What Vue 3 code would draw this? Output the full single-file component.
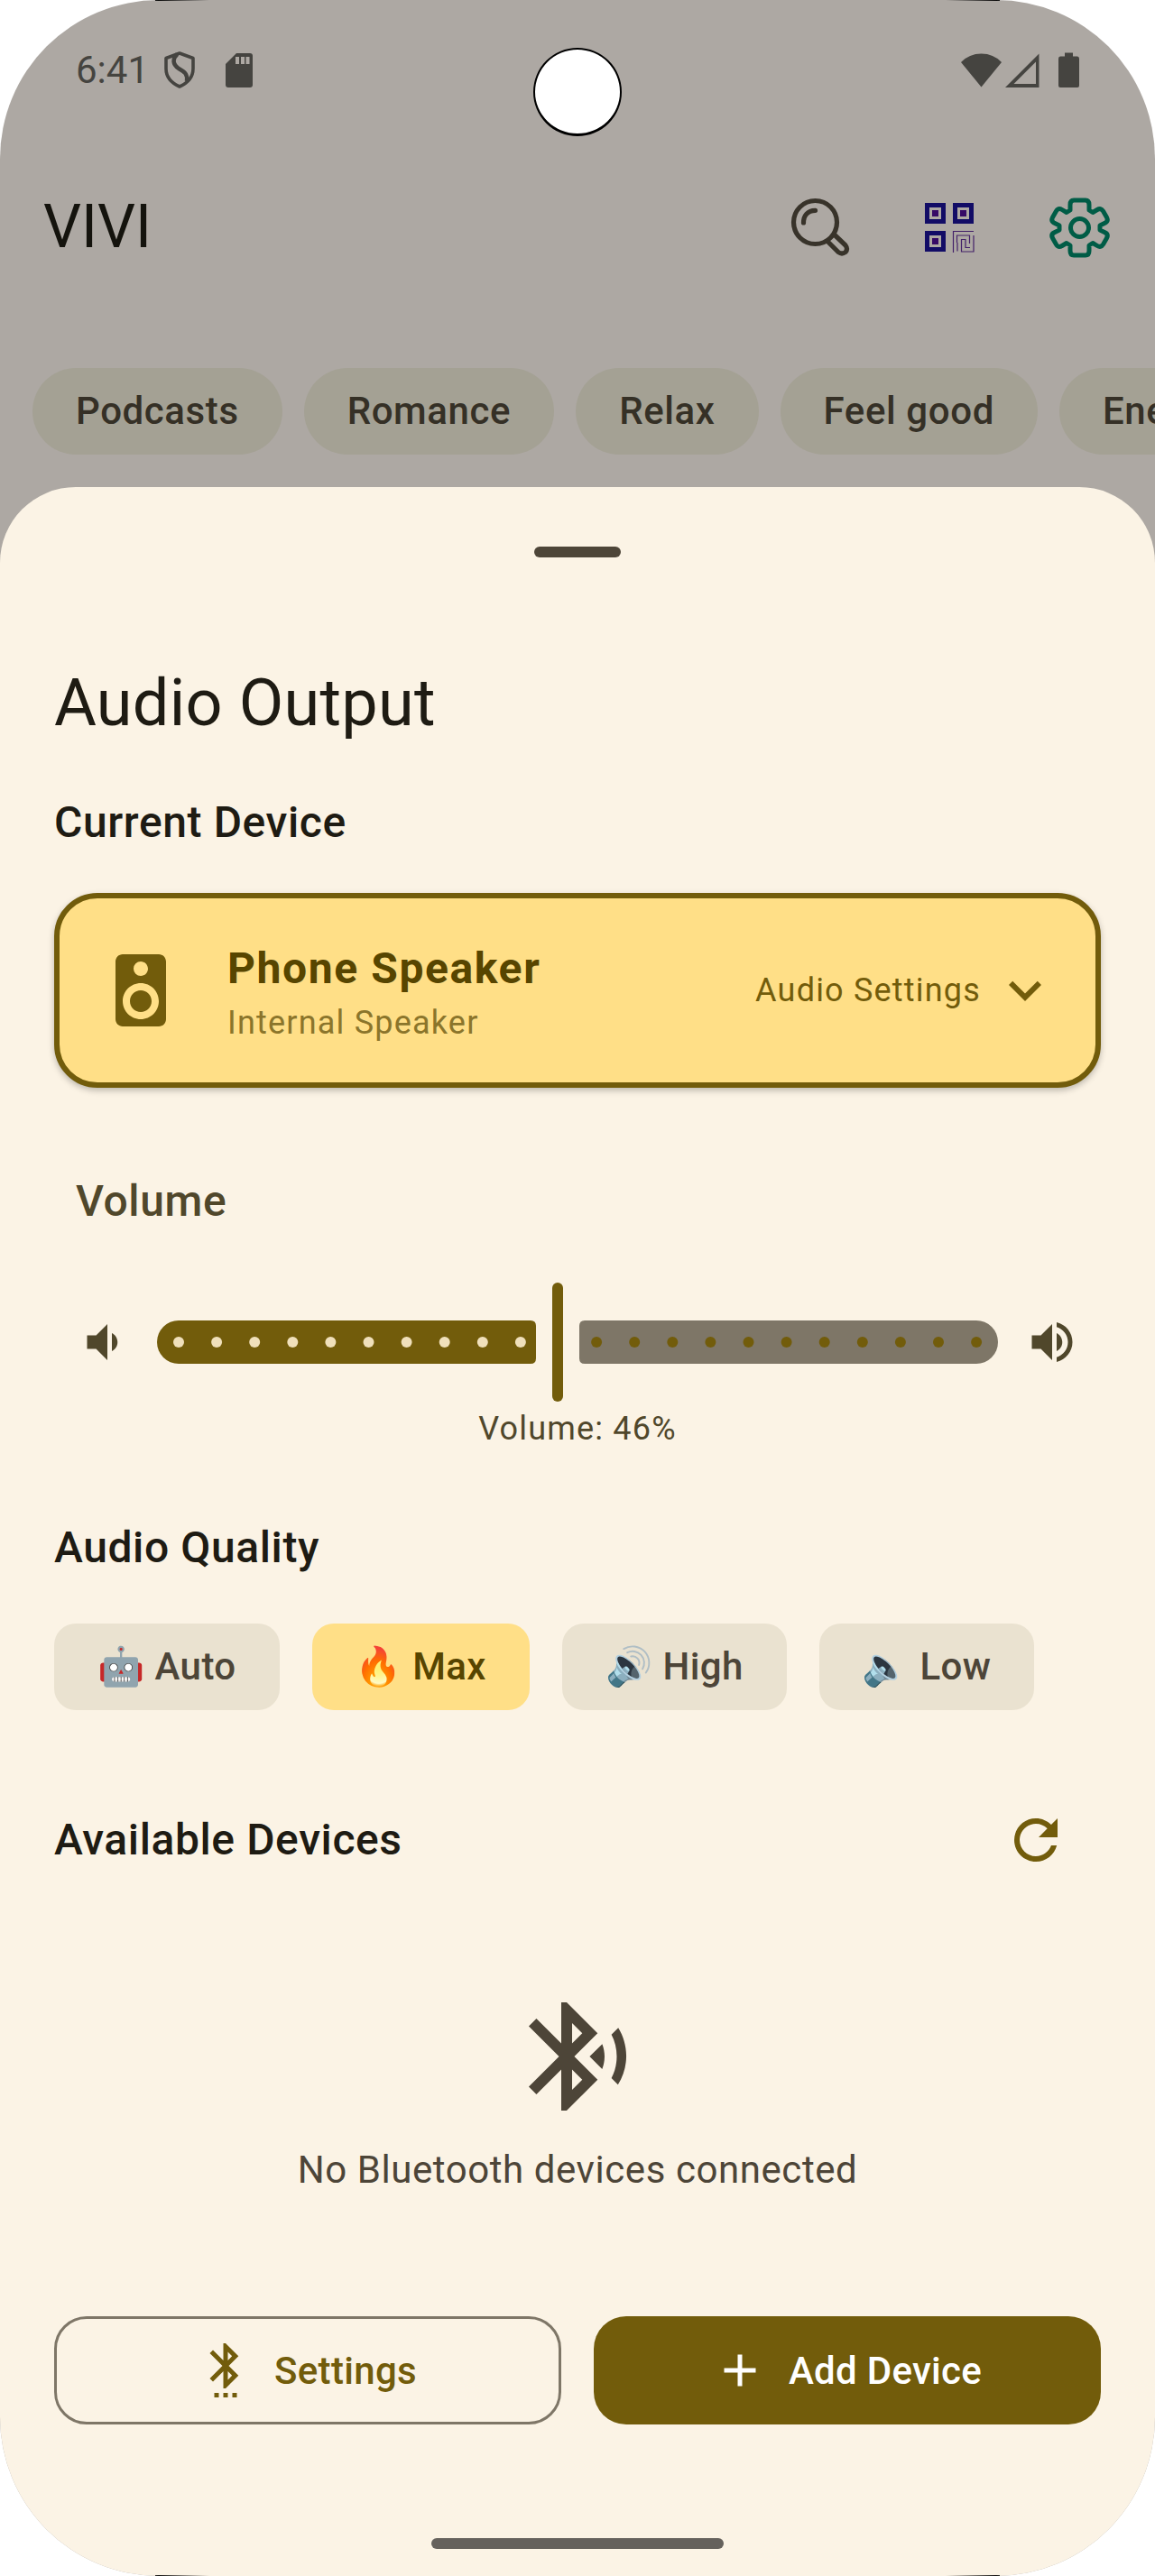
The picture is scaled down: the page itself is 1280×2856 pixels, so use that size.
<script setup>
const genres = ['Podcasts', 'Romance', 'Relax', 'Feel good', 'Energize']

const qualities = [
  { icon: '🤖', label: 'Auto' },
  { icon: '🔥', label: 'Max', active: true },
  { icon: '🔊', label: 'High' },
  { icon: '🔈', label: 'Low' },
]

// Slider ticks, in the slider's own coordinates
const tickStep = 42.1
const activeTicks = Array.from({ length: 10 }, (_, i) => 24 + i * tickStep)
const inactiveTicks = Array.from({ length: 11 }, (_, i) => 24 + (i + 11) * tickStep)
</script>

<template>
  <div class="phone">
    <div class="edge edge-top"></div>
    <div class="camera"></div>

    <header class="status">
      <div class="status-left">
        <span class="time">6:41</span>
        <svg class="shield" width="34" height="50" viewBox="0 -1 34 50" fill="none" stroke="#454440" stroke-width="3.6" stroke-linejoin="round">
          <path d="M17 5 L32 10.500 V22 C32 31 26 38 17 42 C8 38 2 31 2 22 V10.500 Z" />
          <path d="M14.500 6 C9 11 9 17 16 22 C23 26 26 28 25 36" stroke-width="4.500" />
        </svg>
        <svg class="sd" width="30" height="38" viewBox="0 0 30 38">
          <path d="M12 0 H27 Q30 0 30 3 V35 Q30 38 27 38 H3 Q0 38 0 35 V12 Z" fill="#454440" />
          <path d="M11 4h4v8h-4zM17 4h4v8h-4zM22.500 4h4v8h-4z" fill="#ada8a3" />
        </svg>
      </div>
      <div class="status-right">
        <svg width="45" height="38" viewBox="0 0 45 38"><path d="M0 10 Q9 0.500 22.500 0.500 Q36 0.500 45 10 L22.500 37.500 Z" fill="#454440" /></svg>
        <svg class="signal" width="38" height="38" viewBox="0 0 38 38"><path fill-rule="evenodd" d="M37.500 0.500 V38 H0 Z M34 9.500 V34 H9.500 Z" fill="#454440" /></svg>
        <svg class="battery" width="23" height="40" viewBox="0 0 23 40"><path d="M7 0.500 H16 V4.500 H21 Q23 4.500 23 7 V37 Q23 39 21 39 H2 Q0 39 0 37 V7 Q0 4.500 2 4.500 H7 Z" fill="#454440" /></svg>
      </div>
    </header>

    <div class="toolbar">
      <span class="brand">VIVI</span>
      <div class="tools">
        <svg width="66" height="66" viewBox="0 0 66 66" fill="none" stroke="#38332a" stroke-width="5.200" stroke-linecap="round" stroke-linejoin="round">
          <circle cx="27.500" cy="27.500" r="24" />
          <path d="M14.500 28 C14.500 20 19 14.500 27.500 14.300" />
          <path d="M42 49.500 L53 60.500 Q57 63.500 61 60.500 Q64 57 61 53 L49 41.500" />
        </svg>
        <svg width="55" height="55" viewBox="0 0 55 55">
          <g fill="none" stroke="#120c66" stroke-width="5"><path d="M2.500 2.500h18v18h-18zM33.500 2.500h18v18h-18zM2.500 33.500h18v18h-18z" /></g>
          <path d="M8 8h7v7h-7zM39 8h7v7h-7zM8 39h7v7h-7z" fill="#360a66" />
          <g fill="none" stroke="#432069" stroke-width="1.200">
            <path d="M31.500 55 V31.500 H54" />
            <path d="M54 36 V54 H40.500 V40.500 H45 V49.500 H50" />
            <path d="M36 53.500 V44 M35.500 44 V36 H49.500 V45" />
          </g>
        </svg>
        <svg width="67" height="67" viewBox="0 0 67 67" fill="none" stroke="#005c46" stroke-width="5" stroke-linejoin="round">
          <circle cx="33.500" cy="33.500" r="10" />
          <path d="M27 3 H40 Q44 3 44 8 V14 L48 16.500 L53 13.500 Q57 11 59.500 15 L63.500 22 Q65.500 26 62 28 L56 31 V36 L62 39 Q65.500 41 63.500 45 L59.500 52 Q57 56 53 53.500 L48 50.500 L44 53 V59 Q44 64 40 64 H27 Q23 64 23 59 V53 L19 50.500 L14 53.500 Q10 56 7.500 52 L3.500 45 Q1.500 41 5 39 L11 36 V31 L5 28 Q1.500 26 3.500 22 L7.500 15 Q10 11 14 13.500 L19 16.500 L23 14 V8 Q23 3 27 3 Z" />
        </svg>
      </div>
    </div>

    <div class="genres">
      <span v-for="g in genres" :key="g" class="genre">{{ g }}</span>
    </div>

    <main class="sheet">
      <div class="handle"></div>
      <h1>Audio Output</h1>
      <h2 class="current">Current Device</h2>

      <section class="card">
        <svg width="96" height="96" viewBox="0 0 24 24" fill="#725c0b"><path d="M17 2H7c-1.100 0-2 .9-2 2v16c0 1.100.9 1.990 2 1.990L17 22c1.100 0 2-.9 2-2V4c0-1.100-.9-2-2-2zm-5 2c1.100 0 2 .9 2 2s-.9 2-2 2a2 2 0 1 1 0-4zm0 16c-2.760 0-5-2.240-5-5s2.240-5 5-5 5 2.240 5 5-2.240 5-5 5zm0-8c-1.660 0-3 1.340-3 3s1.340 3 3 3 3-1.340 3-3-1.340-3-3-3z" /></svg>
        <div class="device">
          <strong>Phone Speaker</strong>
          <span>Internal Speaker</span>
        </div>
        <span class="settings-link">Audio Settings</span>
        <svg width="72" height="72" viewBox="0 0 24 24" fill="#725c0b"><path d="M16.590 8.590L12 13.170 7.410 8.590 6 10l6 6 6-6z" /></svg>
      </section>

      <h2 class="volume-title">Volume</h2>
      <div class="volume-row">
        <svg width="60" height="60" viewBox="0 0 24 24" fill="#50472b"><path d="M18.500 12c0-1.770-1.020-3.290-2.500-4.030v8.050c1.480-.73 2.500-2.250 2.500-4.020zM5 9v6h4l5 5V4L9 9H5z" /></svg>
        <svg class="slider" width="932" height="132" viewBox="0 0 932 132">
          <path d="M24 42 H414 Q420 42 420 48 V84 Q420 90 414 90 H24 A24 24 0 0 1 24 42 Z" fill="#725c0b" />
          <path d="M474 42 H908 A24 24 0 0 1 908 90 H474 Q468 90 468 84 V48 Q468 42 474 42 Z" fill="#7e7667" />
          <rect x="438" y="0" width="12" height="132" rx="6" fill="#725c0b" />
          <circle v-for="x in activeTicks" :key="x" :cx="x" cy="66" r="6" fill="#f0e0bb" />
          <circle v-for="x in inactiveTicks" :key="x" :cx="x" cy="66" r="6" fill="#725c0b" />
        </svg>
        <svg width="60" height="60" viewBox="0 0 24 24" fill="#50472b"><path d="M3 9v6h4l5 5V4L7 9H3zm13.500 3c0-1.770-1.020-3.290-2.500-4.030v8.050c1.480-.73 2.500-2.250 2.500-4.020zM14 3.230v2.060c2.890.86 5 3.540 5 6.710s-2.110 5.850-5 6.710v2.060c4.010-.91 7-4.490 7-8.770s-2.990-7.860-7-8.770z" /></svg>
      </div>
      <p class="volume-value">Volume: 46%</p>

      <h2 class="quality-title">Audio Quality</h2>
      <div class="qualities">
        <span v-for="q in qualities" :key="q.label" class="quality" :class="{ active: q.active }">{{ q.icon }} {{ q.label }}</span>
      </div>

      <div class="available">
        <h2>Available Devices</h2>
        <svg width="72" height="72" viewBox="0 0 24 24" fill="#725c0b"><path d="M17.650 6.350C16.200 4.900 14.210 4 12 4c-4.420 0-7.990 3.580-7.990 8s3.570 8 7.990 8c3.730 0 6.840-2.550 7.730-6h-2.080c-.82 2.330-3.040 4-5.650 4-3.310 0-6-2.690-6-6s2.690-6 6-6c1.660 0 3.140.69 4.220 1.780L13 11h7V4l-2.350 2.350z" /></svg>
      </div>

      <div class="empty">
        <svg width="144" height="144" viewBox="0 0 24 24" fill="#4d4538"><path d="M14.240 12.010l2.320 2.320c.28-.72.44-1.510.44-2.330 0-.82-.16-1.590-.43-2.310l-2.330 2.320zm5.290-5.300l-1.260 1.260c.63 1.210.98 2.570.98 4.020s-.36 2.820-.98 4.020l1.200 1.200c.97-1.540 1.540-3.360 1.540-5.310-.01-1.890-.55-3.670-1.480-5.190zm-3.820 1L10 2H9v7.590L4.410 5 3 6.410 8.590 12 3 17.590 4.410 19 9 14.410V22h1l5.710-5.710-4.300-4.290 4.300-4.290zM11 5.830l1.880 1.880L11 9.590V5.830zm1.880 10.460L11 18.170v-3.760l1.880 1.880z" /></svg>
        <p>No Bluetooth devices connected</p>
      </div>

      <div class="actions">
        <button class="btn outlined">
          <svg width="60" height="60" viewBox="0 0 24 24" fill="#725c0b"><path d="M11 24h2v-2h-2v2zm-4 0h2v-2H7v2zm8 0h2v-2h-2v2zm2.710-18.290L12 0h-1v7.590L6.410 3 5 4.410 10.590 10 5 15.590 6.410 17 11 12.410V20h1l5.710-5.710-4.300-4.290 4.300-4.290zM13 3.830l1.880 1.880L13 7.590V3.830zm1.880 10.460L13 16.170v-3.760l1.880 1.880z" /></svg>
          Settings
        </button>
        <button class="btn filled">
          <svg width="60" height="60" viewBox="0 0 24 24" fill="#fff"><path d="M19 13h-6v6h-2v-6H5v-2h6V5h2v6h6v2z" /></svg>
          Add Device
        </button>
      </div>
      <div class="home-bar"></div>
    </main>
    <div class="edge edge-bottom"></div>
  </div>
</template>

<style>
body {
  background: #fff;
}
</style>

<style scoped>
.phone {
  position: relative;
  width: 1280px;
  height: 2856px;
  overflow: hidden;
  border-radius: 176px;
  background: #ada8a3;
  font-family: Roboto, sans-serif;
  color: #1e1b13;
}
svg {
  display: block;
  flex: none;
}
h1,
h2,
p {
  margin: 0;
}
.edge {
  position: absolute;
  left: 172px;
  right: 172px;
  height: 1px;
  z-index: 2;
  background: linear-gradient(90deg, #000, rgba(0, 0, 0, 0) 60px, rgba(0, 0, 0, 0) calc(100% - 60px), #000);
}
.edge-top {
  top: 0;
}
.edge-bottom {
  bottom: 0;
}
.camera {
  position: absolute;
  left: 591px;
  top: 53px;
  width: 98px;
  height: 98px;
  box-sizing: border-box;
  border: 2px solid #000;
  border-bottom-width: 3px;
  border-radius: 50%;
  background: #fff;
}
.status {
  height: 156px;
  padding: 0 84px;
  display: flex;
  align-items: center;
  justify-content: space-between;
}
.status-left,
.status-right {
  display: flex;
  align-items: center;
}
.time {
  width: 98px;
  font-size: 42px;
  line-height: 48px;
  color: #454440;
}
.sd {
  margin-left: 34px;
}
.signal {
  margin-left: 4px;
}
.battery {
  margin-left: 21px;
}
.toolbar {
  height: 192px;
  padding: 0 50px 0 48px;
  display: flex;
  align-items: center;
  justify-content: space-between;
}
.brand {
  font-size: 66px;
  line-height: 84px;
  color: #14130d;
}
.tools {
  display: flex;
  align-items: center;
  gap: 83px;
}
.genres {
  margin-top: 60px;
  padding-left: 36px;
  display: flex;
  gap: 24px;
}
.genre {
  flex: none;
  height: 96px;
  padding: 0 48px;
  border-radius: 48px;
  background: #a4a194;
  color: #353026;
  font-size: 42px;
  font-weight: 500;
  line-height: 96px;
  letter-spacing: 0.6px;
}
.sheet {
  margin-top: 36px;
  height: 2316px;
  padding: 66px 60px 0;
  box-sizing: border-box;
  border-radius: 84px 84px 0 0;
  background: #fbf3e5;
}
.handle {
  width: 96px;
  height: 12px;
  margin: 0 auto;
  border-radius: 6px;
  background: #4d4538;
}
h1 {
  margin-top: 113px;
  font-size: 72px;
  font-weight: 400;
  line-height: 97px;
  letter-spacing: 0.25px;
}
h2 {
  font-size: 48px;
  font-weight: 500;
  line-height: 72px;
  letter-spacing: 0.6px;
}
.current {
  margin-top: 48px;
}
.card {
  margin-top: 42px;
  height: 216px;
  padding: 0 42px;
  box-sizing: border-box;
  display: flex;
  align-items: center;
  border: 6px solid #725c0b;
  border-radius: 48px;
  background: #ffdf87;
  box-shadow: 0 3px 7px rgba(0, 0, 0, 0.25);
}
.device {
  margin-left: 48px;
  flex: 1;
  display: flex;
  flex-direction: column;
}
.device strong {
  font-size: 48px;
  font-weight: 700;
  line-height: 72px;
  letter-spacing: 1.6px;
  color: #574500;
}
.device span {
  font-size: 36px;
  line-height: 48px;
  letter-spacing: 1.2px;
  color: #8b752b;
}
.settings-link {
  margin-right: 13px;
  font-size: 36px;
  line-height: 48px;
  letter-spacing: 1.2px;
  color: #725c0b;
}
.volume-title {
  margin: 90px 0 0 24px;
  color: #50472b;
}
.volume-row {
  margin-top: 54px;
  padding: 0 24px;
  display: flex;
  align-items: center;
  justify-content: space-between;
}
.volume-value {
  margin-top: 6px;
  font-size: 36px;
  line-height: 48px;
  letter-spacing: 1.2px;
  text-align: center;
  color: #50472b;
}
.quality-title {
  margin-top: 72px;
}
.qualities {
  margin-top: 48px;
  display: flex;
  gap: 36px;
}
.quality {
  height: 96px;
  padding: 0 48px;
  border-radius: 24px;
  background: #eae2d0;
  color: #4d4538;
  font-family: Roboto, 'Noto Color Emoji', sans-serif;
  font-size: 42px;
  font-weight: 500;
  line-height: 96px;
  letter-spacing: 0.42px;
}
.quality.active {
  background: #ffdf87;
  color: #574500;
}
.available {
  margin-top: 72px;
  height: 144px;
  padding-right: 36px;
  display: flex;
  align-items: center;
  justify-content: space-between;
}
.empty {
  margin-top: 96px;
  display: flex;
  flex-direction: column;
  align-items: center;
  gap: 24px;
}
.empty p {
  font-size: 42px;
  line-height: 60px;
  letter-spacing: 0.57px;
  color: #4d4538;
}
.actions {
  margin-top: 132px;
  display: grid;
  grid-template-columns: 1fr 1fr;
  gap: 36px;
}
.btn {
  box-sizing: border-box;
  height: 120px;
  padding: 0;
  display: flex;
  align-items: center;
  justify-content: center;
  gap: 24px;
  border: 0;
  border-radius: 36px;
  font-family: inherit;
  font-size: 42px;
  font-weight: 500;
  letter-spacing: 0.3px;
}
.outlined {
  border: 3px solid #7e7667;
  background: transparent;
  color: #725c0b;
}
.filled {
  background: #725c0b;
  color: #fff;
}
.home-bar {
  width: 324px;
  height: 12px;
  margin: 126px auto 0;
  border-radius: 6px;
  background: #65615c;
}
</style>
